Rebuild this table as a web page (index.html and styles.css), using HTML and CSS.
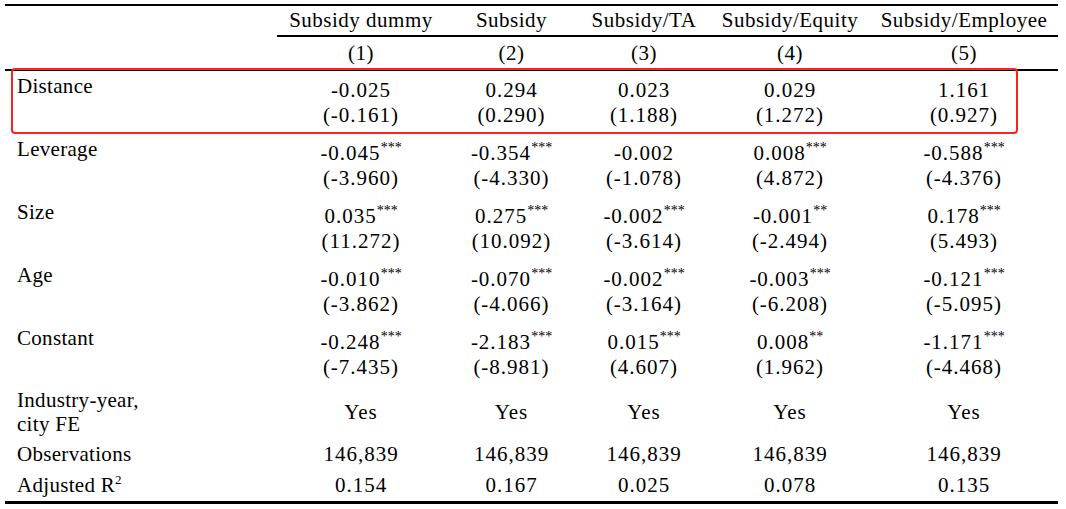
FILE: index.html
```html
<!DOCTYPE html>
<html>
<head>
<meta charset="utf-8">
<link rel="stylesheet" href="styles.css">
</head>
<body>
<div class="wrap">
  <table class="reg">
    <colgroup>
      <col class="c-label">
      <col class="c1">
      <col class="c2">
      <col class="c3">
      <col class="c4">
      <col class="c5">
    </colgroup>
    <thead>
      <tr class="h1">
        <th class="lab"></th>
        <th>Subsidy dummy</th>
        <th>Subsidy</th>
        <th>Subsidy/TA</th>
        <th>Subsidy/Equity</th>
        <th>Subsidy/Employee</th>
      </tr>
      <tr class="h2">
        <th class="lab"></th>
        <th>(1)</th>
        <th>(2)</th>
        <th>(3)</th>
        <th>(4)</th>
        <th>(5)</th>
      </tr>
    </thead>
    <tbody>
      <tr class="var">
        <td class="lab">Distance</td>
        <td><div>-0.025</div><div>(-0.161)</div></td>
        <td><div>0.294</div><div>(0.290)</div></td>
        <td><div>0.023</div><div>(1.188)</div></td>
        <td><div>0.029</div><div>(1.272)</div></td>
        <td><div>1.161</div><div>(0.927)</div></td>
      </tr>
      <tr class="var">
        <td class="lab">Leverage</td>
        <td><div>-0.045<sup class="st">***</sup></div><div>(-3.960)</div></td>
        <td><div>-0.354<sup class="st">***</sup></div><div>(-4.330)</div></td>
        <td><div>-0.002</div><div>(-1.078)</div></td>
        <td><div>0.008<sup class="st">***</sup></div><div>(4.872)</div></td>
        <td><div>-0.588<sup class="st">***</sup></div><div>(-4.376)</div></td>
      </tr>
      <tr class="var">
        <td class="lab">Size</td>
        <td><div>0.035<sup class="st">***</sup></div><div>(11.272)</div></td>
        <td><div>0.275<sup class="st">***</sup></div><div>(10.092)</div></td>
        <td><div>-0.002<sup class="st">***</sup></div><div>(-3.614)</div></td>
        <td><div>-0.001<sup class="st">**</sup></div><div>(-2.494)</div></td>
        <td><div>0.178<sup class="st">***</sup></div><div>(5.493)</div></td>
      </tr>
      <tr class="var">
        <td class="lab">Age</td>
        <td><div>-0.010<sup class="st">***</sup></div><div>(-3.862)</div></td>
        <td><div>-0.070<sup class="st">***</sup></div><div>(-4.066)</div></td>
        <td><div>-0.002<sup class="st">***</sup></div><div>(-3.164)</div></td>
        <td><div>-0.003<sup class="st">***</sup></div><div>(-6.208)</div></td>
        <td><div>-0.121<sup class="st">***</sup></div><div>(-5.095)</div></td>
      </tr>
      <tr class="var">
        <td class="lab">Constant</td>
        <td><div>-0.248<sup class="st">***</sup></div><div>(-7.435)</div></td>
        <td><div>-2.183<sup class="st">***</sup></div><div>(-8.981)</div></td>
        <td><div>0.015<sup class="st">***</sup></div><div>(4.607)</div></td>
        <td><div>0.008<sup class="st">**</sup></div><div>(1.962)</div></td>
        <td><div>-1.171<sup class="st">***</sup></div><div>(-4.468)</div></td>
      </tr>
      <tr class="fe">
        <td class="lab">Industry-year,<br>city FE</td>
        <td>Yes</td>
        <td>Yes</td>
        <td>Yes</td>
        <td>Yes</td>
        <td>Yes</td>
      </tr>
      <tr class="obs">
        <td class="lab">Observations</td>
        <td>146,839</td>
        <td>146,839</td>
        <td>146,839</td>
        <td>146,839</td>
        <td>146,839</td>
      </tr>
      <tr class="r2">
        <td class="lab">Adjusted R<sup class="sq">2</sup></td>
        <td>0.154</td>
        <td>0.167</td>
        <td>0.025</td>
        <td>0.078</td>
        <td>0.135</td>
      </tr>
    </tbody>
  </table>
  <div class="highlight"></div>
</div>
</body>
</html>
```

FILE: styles.css
```css
html, body {
  margin: 0;
  padding: 0;
  background: #fff;
}

body {
  font-family: "Liberation Serif", "Times New Roman", serif;
  font-size: 21px;
  color: #000;
}

.wrap {
  position: relative;
  padding: 4px 0 0 5px;
}

.reg {
  border-collapse: separate;
  border-spacing: 0;
  table-layout: fixed;
  width: 1053px;
  border-top: 2px solid #000;
  border-bottom: 3px solid #000;
}

.c-label { width: 272px; }
.c1 { width: 168px; }
.c2 { width: 133px; }
.c3 { width: 132px; }
.c4 { width: 160px; }
.c5 { width: 188px; }

.reg th {
  font-weight: normal;
  text-align: center;
  padding: 0;
  white-space: nowrap;
  letter-spacing: 0.5px;
}

.reg td {
  padding: 0;
  text-align: center;
  white-space: nowrap;
  letter-spacing: 1px;
}

.reg .lab {
  text-align: left;
  padding-left: 12px;
  letter-spacing: 0.3px;
}

.h1 th {
  height: 29px;
  line-height: 29px;
  vertical-align: middle;
}

.h1 th:not(.lab) {
  border-bottom: 2px solid #000;
}

.h2 th {
  height: 32px;
  line-height: 32px;
  border-bottom: 2px solid #000;
}

.var td {
  vertical-align: top;
  line-height: 25px;
  padding-top: 7px;
  padding-bottom: 6px;
}

.var td.lab {
  padding-top: 3px;
  padding-bottom: 10px;
}

.st {
  font-size: 14px;
  line-height: 0;
  vertical-align: 8px;
  letter-spacing: 0;
}

.fe td {
  height: 52px;
  line-height: 24px;
  vertical-align: middle;
  padding-top: 0;
  padding-bottom: 0;
}

.obs td {
  height: 32px;
  line-height: 32px;
  vertical-align: middle;
}

.r2 td {
  height: 31px;
  line-height: 31px;
  vertical-align: middle;
}

.sq {
  font-size: 13px;
  line-height: 0;
  vertical-align: 8px;
}

.highlight {
  position: absolute;
  left: 11px;
  top: 68px;
  width: 1007px;
  height: 66px;
  box-sizing: border-box;
  border: 2px solid #ff2020;
  border-radius: 4px;
  pointer-events: none;
}
```
